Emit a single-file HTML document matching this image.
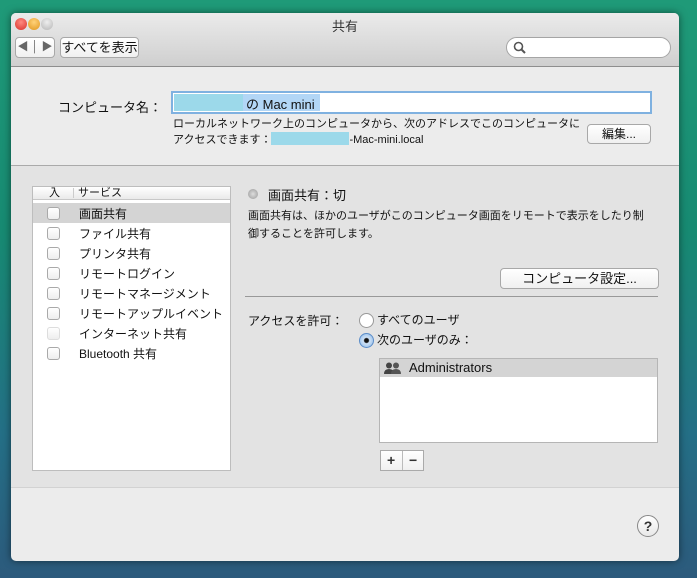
<!DOCTYPE html>
<html><head><meta charset="utf-8"><style>
*{margin:0;padding:0;box-sizing:border-box}
body{width:697px;height:578px;overflow:hidden;position:relative;font-family:"Liberation Sans","Noto Sans CJK JP",sans-serif;color:#111;
background:linear-gradient(180deg,#1f9a78 0%,#178a72 40%,#246f86 75%,#2c5a7c 100%)}
.a{position:absolute}
.win{left:11px;top:13px;width:668px;height:548px;background:#ececec;border-radius:5px;overflow:hidden;box-shadow:0 0 8px rgba(0,0,0,.5)}
.tb{left:0;top:0;width:668px;height:54px;background:linear-gradient(#ebebeb,#cfcfcf);border-bottom:1px solid #8e8e8e}
.btn{background:linear-gradient(#fff,#f0f0f0);border:1px solid #a8a8a8;border-radius:4px;font-size:12px;text-align:center}
.tl{width:12px;height:12px;border-radius:50%}
.cb{width:13px;height:13px;border:1px solid #a9a9a9;border-radius:3px;background:linear-gradient(#fff,#eee);left:14px}
.row{left:1px;width:198px;height:20px;font-size:12px}
.row span{position:absolute;left:46px;top:2px}
</style></head><body>
<div class="a win">
 <div class="a tb">
  <div class="a tl" style="left:4px;top:5px;background:radial-gradient(circle at 50% 35%,#ff8a80,#d8312a)"></div>
  <div class="a tl" style="left:17px;top:5px;background:radial-gradient(circle at 50% 35%,#ffd27a,#e0951c)"></div>
  <div class="a tl" style="left:30px;top:5px;background:radial-gradient(circle at 50% 35%,#eee,#b5b5b5)"></div>
  <div class="a" style="left:0;width:668px;top:3px;text-align:center;font-size:13px;color:#333">共有</div>
  <div class="a btn" style="left:4px;top:24px;width:40px;height:21px;font-size:11px;color:#666;line-height:19px">◀ │ ▶</div>
  <div class="a btn" style="left:49px;top:24px;width:79px;height:21px;line-height:19px;font-size:13px">すべてを表示</div>
  <div class="a" style="left:495px;top:24px;width:165px;height:21px;border:1px solid #a5a5a5;border-radius:11px;background:#fff"></div>
  <svg class="a" style="left:502px;top:28px" width="14" height="14"><circle cx="5.5" cy="5.5" r="4" fill="none" stroke="#555" stroke-width="1.6"/><line x1="8.5" y1="8.5" x2="12" y2="12" stroke="#555" stroke-width="2"/></svg>
 </div>
 <div class="a" style="left:0;top:84px;width:151px;text-align:right;font-size:13px">コンピュータ名：</div>
 <div class="a" style="left:160px;top:78px;width:481px;height:23px;border:2px solid #7fb1e0;background:#fff"></div>
 <div class="a" style="left:163px;top:81px;width:146px;height:17px;background:#b2d6f6"></div>
 <div class="a" style="left:163px;top:81px;width:69px;height:17px;background:#9cd9ea"></div>
 <div class="a" style="left:235px;top:81px;font-size:13px">の Mac mini</div>
 <div class="a" style="left:162px;top:103px;font-size:11px;line-height:16px">ローカルネットワーク上のコンピュータから、次のアドレスでこのコンピュータに<br>アクセスできます：<span style="display:inline-block;width:78px;height:13px;background:#9cd9ea;vertical-align:-2px"></span>-Mac-mini.local</div>
 <div class="a btn" style="left:576px;top:111px;width:64px;height:20px;line-height:18px">編集...</div>
 <div class="a" style="left:0;top:152px;width:668px;height:323px;background:#e3e3e3;border-top:1px solid #aaa;border-bottom:1px solid #d2d2d2"></div>
 <div class="a" style="left:21px;top:173px;width:199px;height:285px;background:#fff;border:1px solid #bdbdbd">
  <div class="a" style="left:0;top:0;width:197px;height:13px;background:linear-gradient(#fff,#eaeaea);border-bottom:1px solid #c8c8c8;font-size:11px;line-height:12px"><span class="a" style="left:16px">入</span><span class="a" style="left:40px;top:1px;height:10px;border-left:1px solid #ccc"></span><span class="a" style="left:45px">サービス</span></div>
  <div class="a row" style="top:16px;background:#d4d4d4;left:0;width:197px"><div class="a cb" style="top:4px;left:14px"></div><span>画面共有</span></div>
  <div class="a row" style="top:36px;left:0"><div class="a cb" style="top:4px"></div><span>ファイル共有</span></div>
  <div class="a row" style="top:56px;left:0"><div class="a cb" style="top:4px"></div><span>プリンタ共有</span></div>
  <div class="a row" style="top:76px;left:0"><div class="a cb" style="top:4px"></div><span>リモートログイン</span></div>
  <div class="a row" style="top:96px;left:0"><div class="a cb" style="top:4px"></div><span>リモートマネージメント</span></div>
  <div class="a row" style="top:116px;left:0"><div class="a cb" style="top:4px"></div><span>リモートアップルイベント</span></div>
  <div class="a row" style="top:136px;left:0"><div class="a cb" style="top:4px;border-color:#ddd"></div><span>インターネット共有</span></div>
  <div class="a row" style="top:156px;left:0"><div class="a cb" style="top:4px"></div><span>Bluetooth 共有</span></div>
 </div>
 <div class="a" style="left:237px;top:176px;width:10px;height:10px;border-radius:50%;background:radial-gradient(#ddd,#999)"></div>
 <div class="a" style="left:257px;top:172px;font-size:13px">画面共有：切</div>
 <div class="a" style="left:237px;top:194px;font-size:11px;line-height:18px">画面共有は、ほかのユーザがこのコンピュータ画面をリモートで表示をしたり制<br>御することを許可します。</div>
 <div class="a btn" style="left:489px;top:255px;width:159px;height:21px;line-height:19px;font-size:13px">コンピュータ設定...</div>
 <div class="a" style="left:234px;top:283px;width:413px;height:1px;background:#999"></div>
 <div class="a" style="left:237px;top:299px;font-size:12px">アクセスを許可：</div>
 <div class="a" style="left:348px;top:300px;width:15px;height:15px;border-radius:50%;border:1px solid #999;background:#fff"></div>
 <div class="a" style="left:366px;top:298px;font-size:12px">すべてのユーザ</div>
 <div class="a" style="left:348px;top:320px;width:15px;height:15px;border-radius:50%;border:1px solid #5a8cc8;background:radial-gradient(circle,#111 2px,#cfe2f6 3px,#8ab6e6)"></div>
 <div class="a" style="left:366px;top:318px;font-size:12px">次のユーザのみ：</div>
 <div class="a" style="left:368px;top:345px;width:279px;height:85px;background:#fff;border:1px solid #b5b5b5">
  <div class="a" style="left:0;top:0;width:277px;height:18px;background:#d4d4d4"></div>
  <svg class="a" style="left:4px;top:3px" width="18" height="13"><circle cx="5" cy="3.5" r="3" fill="#444"/><path d="M0 12 Q0 7 5 7 Q10 7 10 12Z" fill="#444"/><circle cx="12" cy="3.5" r="3" fill="#555"/><path d="M7 12 Q7 7 12 7 Q17 7 17 12Z" fill="#555"/></svg>
  <div class="a" style="left:29px;top:1px;font-size:13px">Administrators</div>
 </div>
 <div class="a" style="left:369px;top:437px;width:44px;height:21px;border:1px solid #aaa;background:linear-gradient(#fff,#f0f0f0);font-size:14px;font-weight:bold;line-height:18px;color:#333"><span class="a" style="left:6px">+</span><span class="a" style="left:21px;top:0;height:19px;border-left:1px solid #bbb"></span><span class="a" style="left:28px">−</span></div>
 <div class="a" style="left:626px;top:502px;width:22px;height:22px;border-radius:50%;border:1px solid #888;background:linear-gradient(#fff,#e8e8e8);text-align:center;font-size:14px;font-weight:bold;line-height:20px;color:#333">?</div>
</div>
</body></html>
